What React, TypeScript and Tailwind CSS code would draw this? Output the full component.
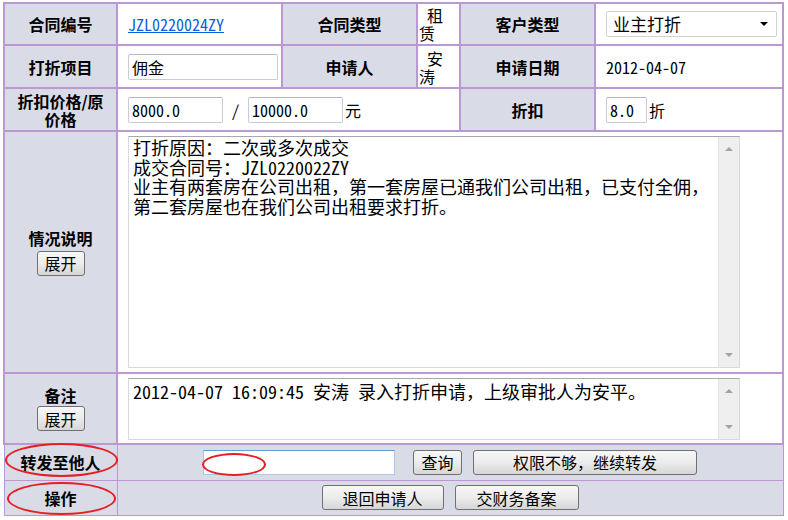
const cjk = "font-['Noto_Sans_Mono_CJK_SC','Noto_Sans_CJK_SC',sans-serif]";

const label =
  "bg-[#d9dce6] border-2 border-[#bb98d3] text-center font-bold text-[16px] leading-[18px] text-black font-['Noto_Sans_CJK_SC',sans-serif]";
const value = `bg-white border-2 border-[#bb98d3] pl-[10px] text-[16px] text-black ${cjk}`;

const input =
  "h-[26px] border border-[#c8cbd2] border-t-[#b5b8bf] rounded-[2px] bg-white px-[3px] text-[16px] leading-[24px] text-black";

const btn =
  "h-[25px] border border-[#707070] rounded-[3px] bg-linear-to-b from-[#f7f7f7] via-[#ececec] to-[#d6d6d6] text-[16px] leading-[22px] text-black";

function Scrollbar() {
  return (
    <div className="w-[21px] shrink-0 bg-[#efefef] border-l border-[#e2e2e2] flex flex-col items-center justify-between py-[10px]">
      <div className="w-0 h-0 border-l-[4px] border-r-[4px] border-b-[4px] border-l-transparent border-r-transparent border-b-[#a3a3a3]" />
      <div className="w-0 h-0 border-l-[4px] border-r-[4px] border-t-[4px] border-l-transparent border-r-transparent border-t-[#a3a3a3]" />
    </div>
  );
}

function TextBox({ h, pt, lines }: { h: string; pt: string; lines: string[] }) {
  return (
    <div className={`flex w-[612px] ${h} border border-[#d6d9e0] border-t-[#a9a9a9] bg-white`}>
      <div className={`flex-1 pl-[4px] ${pt} text-[18px] leading-[19.5px] text-black ${cjk}`}>
        {lines.map((l, i) => (
          <div key={i} className="whitespace-pre">
            {l}
          </div>
        ))}
      </div>
      <Scrollbar />
    </div>
  );
}

function Ellipse({ cls }: { cls: string }) {
  return <div className={`absolute rounded-[50%] border-2 border-[#e51f24] pointer-events-none ${cls}`} />;
}

export default function App() {
  return (
    <div className="relative w-[788px] h-[520px] bg-white pl-[3px] pt-[2px]">
      <table className="border-collapse table-fixed w-[779px]">
        <colgroup>
          <col className="w-[113px]" />
          <col className="w-[165px]" />
          <col className="w-[135px]" />
          <col className="w-[43px]" />
          <col className="w-[135px]" />
          <col className="w-[188px]" />
        </colgroup>
        <tbody>
          <tr className="h-[42px]">
            <td className={label}>合同编号</td>
            <td className={value}>
              <a href="#" className="text-[#0b5fd8] underline">
                JZL0220024ZY
              </a>
            </td>
            <td className={label}>合同类型</td>
            <td className={`bg-white border-2 border-[#bb98d3] text-[16px] leading-[18px] ${cjk}`}>
              <div className="pl-[9px]">租</div>
              <div className="pl-[1px]">赁</div>
            </td>
            <td className={label}>客户类型</td>
            <td className={value}>
              <div className="w-[171px] h-[26px] border border-[#cfd2d9] rounded-[2px] flex items-center justify-between pl-[6px] pr-[8px] text-[17px]">
                <span>业主打折</span>
                <span className="w-0 h-0 border-l-[4px] border-r-[4px] border-t-[4px] border-l-transparent border-r-transparent border-t-black" />
              </div>
            </td>
          </tr>
          <tr className="h-[43px]">
            <td className={label}>打折项目</td>
            <td className={value}>
              <div className={`${input} w-[150px]`}>佣金</div>
            </td>
            <td className={label}>申请人</td>
            <td className={`bg-white border-2 border-[#bb98d3] text-[16px] leading-[18px] ${cjk}`}>
              <div className="pl-[9px]">安</div>
              <div className="pl-[1px]">涛</div>
            </td>
            <td className={label}>申请日期</td>
            <td className={`${value} pl-[8px]`}>2012-04-07</td>
          </tr>
          <tr className="h-[43px]">
            <td className={label}>
              折扣价格/原
              <br />
              价格
            </td>
            <td colSpan={3} className={value}>
              <div className="flex items-center">
                <div className={`${input} w-[95px]`}>8000.0</div>
                <span className="w-[25px] text-center">/</span>
                <div className={`${input} w-[95px]`}>10000.0</div>
                <span className="ml-[2px]">元</span>
              </div>
            </td>
            <td className={label}>折扣</td>
            <td className={value}>
              <div className="flex items-center">
                <div className={`${input} w-[41px] px-[2px]`}>8.0</div>
                <span className="ml-[2px]">折</span>
              </div>
            </td>
          </tr>
          <tr className="h-[242px]">
            <td className={label}>
              <div className="flex flex-col items-center">
                <span>情况说明</span>
                <button className={`${btn} w-[48px] h-[24px] mt-[4px] font-normal`}>展开</button>
              </div>
            </td>
            <td colSpan={5} className={value}>
              <TextBox
                h="h-[232px]"
                pt="pt-[1px]"
                lines={[
                  "打折原因：二次或多次成交",
                  "成交合同号：JZL0220022ZY",
                  "业主有两套房在公司出租，第一套房屋已通我们公司出租，已支付全佣，",
                  "第二套房屋也在我们公司出租要求打折。",
                ]}
              />
            </td>
          </tr>
          <tr className="h-[71px]">
            <td className={label}>
              <div className="flex flex-col items-center">
                <span>备注</span>
                <button className={`${btn} w-[48px] h-[25px] mt-[2px] font-normal`}>展开</button>
              </div>
            </td>
            <td colSpan={5} className={value}>
              <TextBox
                h="h-[62px]"
                pt="pt-[3px]"
                lines={["2012-04-07 16:09:45 安涛 录入打折申请，上级审批人为安平。"]}
              />
            </td>
          </tr>
          <tr className="h-[36px]">
            <td className={`${label} border-[1px]`}>转发至他人</td>
            <td colSpan={5} className={`bg-[#d9dce6] border border-[#bb98d3] ${cjk}`}>
              <div className="flex items-center justify-center">
                <div className="w-[192px] h-[25px] border border-[#a9c9e6] border-t-[#5f9fd6] bg-white" />
                <button className={`${btn} w-[49px] ml-[18px]`}>查询</button>
                <button
                  className={`${btn} w-[224px] ml-[11px] border-[#3c9bd8] from-[#f4f8fb] via-[#e8edf2] to-[#d5dbe2]`}
                >
                  权限不够，继续转发
                </button>
              </div>
            </td>
          </tr>
          <tr className="h-[35px]">
            <td className={`${label} border-[1px]`}>操作</td>
            <td colSpan={5} className={`bg-[#d9dce6] border border-[#bb98d3] ${cjk}`}>
              <div className="flex items-center justify-center">
                <button className={`${btn} w-[122px]`}>退回申请人</button>
                <button className={`${btn} w-[124px] ml-[11px]`}>交财务备案</button>
              </div>
            </td>
          </tr>
        </tbody>
      </table>

      <Ellipse cls="left-[5px] top-[443px] w-[113px] h-[34px]" />
      <Ellipse cls="left-[7px] top-[482px] w-[109px] h-[33px]" />
      <Ellipse cls="left-[202px] top-[453px] w-[64px] h-[23px]" />
    </div>
  );
}
